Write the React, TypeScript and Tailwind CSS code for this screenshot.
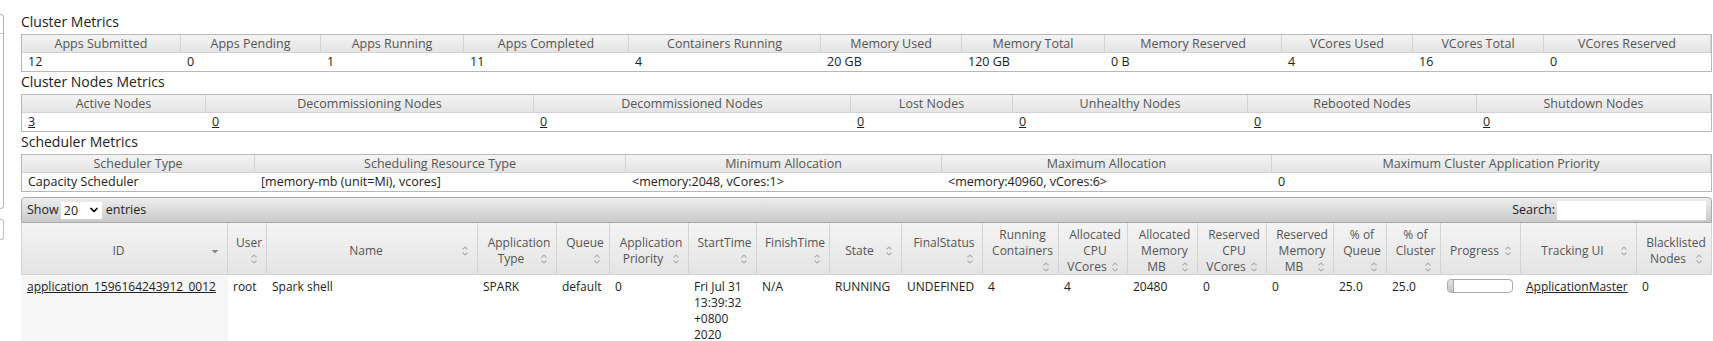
import { ChevronDown } from "lucide-react";

const SortIcon = () => (
  <svg width="16" height="16" viewBox="0 0 16 16" className="shrink-0">
    <path d="M5.5 6.5 L8 4 L10.5 6.5" fill="none" stroke="#b0b0b0" strokeWidth="1.1" />
    <path d="M5.5 9.5 L8 12 L10.5 9.5" fill="none" stroke="#b0b0b0" strokeWidth="1.1" />
  </svg>
);

const SortedIcon = () => (
  <svg width="16" height="16" viewBox="0 0 16 16" className="shrink-0">
    <path d="M4.5 7 H11.5 L8 10.5 Z" fill="#8a8a8a" />
  </svg>
);

type Col = { lines: string[]; mode: "inline" | "below" | "sorted" };

const appCols: Col[] = [
  { lines: ["ID"], mode: "sorted" },
  { lines: ["User"], mode: "below" },
  { lines: ["Name"], mode: "inline" },
  { lines: ["Application", "Type"], mode: "inline" },
  { lines: ["Queue"], mode: "below" },
  { lines: ["Application", "Priority"], mode: "inline" },
  { lines: ["StartTime"], mode: "below" },
  { lines: ["FinishTime"], mode: "below" },
  { lines: ["State"], mode: "inline" },
  { lines: ["FinalStatus"], mode: "below" },
  { lines: ["Running", "Containers"], mode: "below" },
  { lines: ["Allocated", "CPU", "VCores"], mode: "inline" },
  { lines: ["Allocated", "Memory", "MB"], mode: "inline" },
  { lines: ["Reserved", "CPU", "VCores"], mode: "inline" },
  { lines: ["Reserved", "Memory", "MB"], mode: "inline" },
  { lines: ["% of", "Queue"], mode: "below" },
  { lines: ["% of", "Cluster"], mode: "below" },
  { lines: ["Progress"], mode: "inline" },
  { lines: ["Tracking UI"], mode: "inline" },
  { lines: ["Blacklisted", "Nodes"], mode: "inline" },
];

const clusterMetrics = [
  ["Apps Submitted", "12"],
  ["Apps Pending", "0"],
  ["Apps Running", "1"],
  ["Apps Completed", "11"],
  ["Containers Running", "4"],
  ["Memory Used", "20 GB"],
  ["Memory Total", "120 GB"],
  ["Memory Reserved", "0 B"],
  ["VCores Used", "4"],
  ["VCores Total", "16"],
  ["VCores Reserved", "0"],
];

const nodeMetrics = [
  ["Active Nodes", "3"],
  ["Decommissioning Nodes", "0"],
  ["Decommissioned Nodes", "0"],
  ["Lost Nodes", "0"],
  ["Unhealthy Nodes", "0"],
  ["Rebooted Nodes", "0"],
  ["Shutdown Nodes", "0"],
];

const schedulerMetrics = [
  ["Scheduler Type", "Capacity Scheduler"],
  ["Scheduling Resource Type", "[memory-mb (unit=Mi), vcores]"],
  ["Minimum Allocation", "<memory:2048, vCores:1>"],
  ["Maximum Allocation", "<memory:40960, vCores:6>"],
  ["Maximum Cluster Application Priority", "0"],
];

const headBg = "bg-gradient-to-b from-[#f4f4f4] to-[#e4e4e4]";

const Title = ({ children }: { children: string }) => (
  <div className="h-[22px] text-[14px] leading-[20px] text-[#222]">{children}</div>
);

const MetricsTable = ({ rows, grid, link }: { rows: string[][]; grid: string; link?: boolean }) => (
  <div className={`grid ${grid} border border-[#b8b8b8]`}>
    {rows.map(([h]) => (
      <div
        key={h}
        className={`flex h-[18px] items-center justify-center whitespace-nowrap border-b border-r border-[#d3d3d3] last:border-r-0 text-[12.5px] leading-[16px] text-[#555] ${headBg}`}
      >
        {h}
      </div>
    ))}
    {rows.map(([h, v]) => (
      <div key={h + "v"} className="h-[18px] whitespace-nowrap bg-white pl-[6px] text-[12.5px] leading-[18px] text-[#222]">
        {link ? <span className="underline">{v}</span> : v}
      </div>
    ))}
  </div>
);

const HeadCell = ({ col, first }: { col: Col; first: boolean }) => {
  const icon = col.mode === "sorted" ? <SortedIcon /> : <SortIcon />;
  const upper = col.mode === "below" ? col.lines : col.lines.slice(0, -1);
  const last = col.lines[col.lines.length - 1];
  return (
    <div
      className={`flex h-[52px] flex-col justify-center overflow-visible border-r border-b border-[#d3d3d3] pl-[8px] pr-[4px] pt-[4px] text-[12px] leading-[16px] text-[#555] ${headBg} ${first ? "border-l" : ""}`}
    >
      {upper.map((l) => (
        <div key={l} className="flex justify-center whitespace-nowrap">
          {l}
        </div>
      ))}
      {col.mode === "below" ? (
        <div className="flex justify-end">{icon}</div>
      ) : (
        <div className="flex items-center">
          <span className="flex flex-1 justify-center whitespace-nowrap">{last}</span>
          {icon}
        </div>
      )}
    </div>
  );
};

const Cell = ({ children, className = "" }: { children?: React.ReactNode; className?: string }) => (
  <div className={`whitespace-nowrap pl-[5px] pt-[4px] pb-[4px] text-[12px] leading-[16px] text-[#222] ${className}`}>{children}</div>
);

export default function App() {
  return (
    <div className="flex h-[341px] w-[1713px] overflow-hidden bg-white font-['Open_Sans',sans-serif]">
      <div className="w-[4px] shrink-0 pt-[14px]">
        <div className="h-[195px] rounded-r-[4px] border-y border-r border-[#b4b4b4] pt-[18px]">
          <div className="border-t border-[#c8c8c8]" />
        </div>
        <div className="mt-[10px] h-[21px] rounded-r-[3px] border-y border-r border-[#c0c0c0]" />
      </div>

      <div className="ml-[17px] w-[1691px] pt-[12px]">
        <Title>Cluster Metrics</Title>
        <MetricsTable
          rows={clusterMetrics}
          grid="grid-cols-[159px_140px_143px_165px_192px_141px_143px_177px_131px_131px_1fr]"
        />
        <Title>Cluster Nodes Metrics</Title>
        <MetricsTable rows={nodeMetrics} grid="grid-cols-[184px_328px_317px_162px_235px_229px_1fr]" link />
        <Title>Scheduler Metrics</Title>
        <MetricsTable rows={schedulerMetrics} grid="grid-cols-[233px_371px_316px_330px_1fr]" />

        <div className="mt-[5px] flex h-[26px] items-center justify-between rounded-t-[4px] border border-[#aaa] bg-gradient-to-b from-[#ededed] to-[#c9c9c9] px-[5px] text-[12.5px] text-[#222]">
          <div className="flex items-center">
            <span>Show</span>
            <div className="ml-[2px] flex h-[17px] w-[41px] items-center bg-white pl-[3px]">
              <span className="leading-[17px]">20</span>
              <ChevronDown size={12} strokeWidth={3.5} className="ml-[10px] text-black" />
            </div>
            <span className="ml-[4px]">entries</span>
          </div>
          <div className="flex items-center">
            <span>Search:</span>
            <div className="ml-[2px] h-[19px] w-[149px] bg-white" />
          </div>
        </div>

        <div className="grid grid-cols-[207px_39px_211px_79px_53px_79px_68px_73px_72px_81px_76px_69px_70px_69px_67px_53px_54px_80px_116px_1fr]">
          {appCols.map((c, i) => (
            <HeadCell key={c.lines.join(" ")} col={c} first={i === 0} />
          ))}

          <Cell className="bg-[#f6f6f6] pl-[6px]">
            <span className="underline">application_1596164243912_0012</span>
          </Cell>
          <Cell>root</Cell>
          <Cell>Spark shell</Cell>
          <Cell>SPARK</Cell>
          <Cell>default</Cell>
          <Cell>0</Cell>
          <Cell>
            Fri Jul 31
            <br />
            13:39:32
            <br />
            +0800
            <br />
            2020
          </Cell>
          <Cell>N/A</Cell>
          <Cell>RUNNING</Cell>
          <Cell>UNDEFINED</Cell>
          <Cell>4</Cell>
          <Cell>4</Cell>
          <Cell>20480</Cell>
          <Cell>0</Cell>
          <Cell>0</Cell>
          <Cell>25.0</Cell>
          <Cell>25.0</Cell>
          <Cell className="pl-[6px]">
            <div className="h-[14px] w-[66px] overflow-hidden rounded-[4px] border border-[#aaa] bg-white">
              <div className="h-full w-[6px] border-r border-[#aaa] bg-gradient-to-b from-[#e2e2e2] to-[#c4c4c4]" />
            </div>
          </Cell>
          <Cell>
            <span className="underline">ApplicationMaster</span>
          </Cell>
          <Cell>0</Cell>
        </div>
      </div>
    </div>
  );
}
